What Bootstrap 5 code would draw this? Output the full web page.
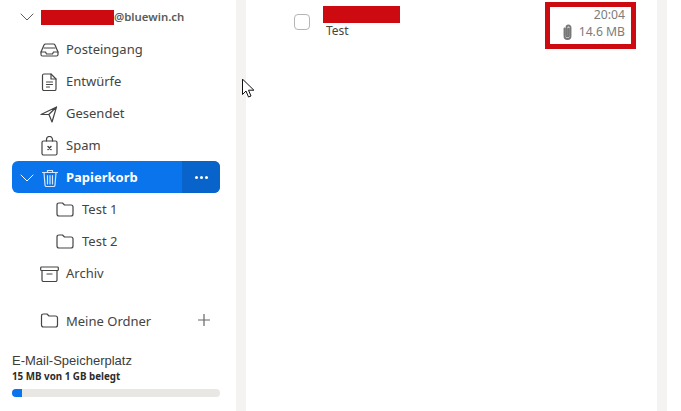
<!DOCTYPE html>
<html lang="de">
<head>
  <meta charset="UTF-8">
  <title>Papierkorb</title>
  <link href="https://cdn.jsdelivr.net/npm/bootstrap@5.3.3/dist/css/bootstrap.min.css" rel="stylesheet">
  <style>
    html, body { height: 100%; overflow: hidden; }
    body { font-family: "Noto Sans", sans-serif; font-size: 13px; color: #444442; background: #fff; }
    .shell { height: 411px; position: relative; }
    .side-pane { width: 236px; padding: 1px 16px 0 12px; }
    .gutter { width: 10px; background: #f4f3f1; }
    .mail-pane { width: 411px; }
    svg { fill: none; stroke: currentColor; stroke-width: 1.2; stroke-linecap: round; stroke-linejoin: round; flex: none; }
    .acct-row, .folder-row { height: 32px; }
    .acct-row { font-size: 11.4px; font-weight: 600; color: #5c5c5a; padding-left: 8px; }
    .acct-row svg { stroke-width: 1; }
    .acct-row .redact { width: 73px; height: 15px; margin-left: 7px; }
    .redact { background: #cc0a10; }
    .folder-row { padding-left: 28px; padding-top: 2px; gap: 7px; }
    .folder-row.nested { padding-left: 44px; gap: 8px; }
    .nested svg { margin-bottom: 2px; }
    .folder-row.active-row { background: #0a74ec; color: #fff; border-radius: 6px; padding-left: 8px; font-weight: 700; overflow: hidden; }
    .active-row svg { stroke-width: 1; }
    .active-row .trash-icon { color: #d3e6fc; stroke-width: 1.2; }
    .more-btn { width: 38px; height: 32px; margin-top: -2px; background: #0863cb; gap: 2px; }
    .more-btn i { width: 3px; height: 3px; background: #fff; border-radius: 50%; }
    .own-folders { margin-top: 16px; }
    .own-folders svg { margin-bottom: 4px; }
    .add-btn { margin-right: 10px; color: #666; }
    .quota { margin-top: 16px; }
    .quota-title { font-family: "Liberation Sans", sans-serif; font-size: 13px; line-height: 16px; color: #3c3c3a; }
    .quota-used { font-size: 9.8px; font-weight: 700; line-height: 16px; color: #2c2c2a; }
    .quota-bar { height: 8px; margin-top: 4px; background: #e8e7e3; border-radius: 4px; overflow: hidden; }
    .quota-fill { height: 100%; background: #0a74ec; }
    .mail-row { padding: 6px 21px 0 48px; }
    .check-box { width: 16px; height: 16px; border: 1px solid #b5b5b3; border-radius: 4px; margin-top: 8px; }
    .mail-text { margin-left: 13px; }
    .mail-text .redact { width: 77px; height: 17px; }
    .mail-subject { line-height: 15px; padding-left: 3px; font-size: 12px; }
    .meta-box { border: 5px solid #cc0a10; width: 91px; height: 47px; margin-top: -4px; padding-right: 6px; font-size: 12.2px; line-height: 16px; color: #7c7c7a; text-align: right; }
    .size-line { margin-top: 1px; gap: 7px; }
    .size-line svg { stroke-width: 1.9; color: #777; }
    .cursor-mark { position: absolute; left: 242px; top: 79px; }
  </style>
</head>
<body>
  <div class="shell d-flex">
    <nav class="side-pane d-flex flex-column">
      <div class="acct-row d-flex align-items-center">
        <svg width="14" height="14" viewBox="0 0 14 14"><path d="M1 4l6 6 6-6"/></svg>
        <span class="redact"></span><span>@bluewin.ch</span>
      </div>
      <div class="folder-row d-flex align-items-center">
        <svg width="19" height="16" viewBox="0 0 19 16"><path d="M1 10l3-7q.5-1 1.500-1h8q1 0 1.500 1l3 7v2.500q0 1.500-1.500 1.500h-14q-1.500 0-1.500-1.500z"/><path d="M1 10h4.500l1 2h6l1-2h4.500M4 6h11"/></svg>
        <span>Posteingang</span>
      </div>
      <div class="folder-row d-flex align-items-center">
        <svg width="19" height="18" viewBox="0 0 19 18"><path d="M2.500 2.500q0-1.500 1.500-1.500h7l5 5v10q0 1.500-1.500 1.500h-10.500q-1.500 0-1.500-1.500z"/><path d="M11 1v5h5M6.500 9h6M6.500 11.500h6M6.500 14h3"/></svg>
        <span>Entwürfe</span>
      </div>
      <div class="folder-row d-flex align-items-center">
        <svg width="19" height="18" viewBox="0 0 19 18"><path d="M1 9.500l15.500-7.500-4.500 15-3-7.500zM8.800 9.500l7.700-7.500"/></svg>
        <span>Gesendet</span>
      </div>
      <div class="folder-row d-flex align-items-center">
        <svg width="19" height="20" viewBox="0 0 19 20"><rect x="2" y="5" width="15" height="14" rx="1.500"/><path d="M6.500 5v-1.500a3 3 0 0 1 6 0v1.500"/><path stroke-width="1.500" d="M8 10.500l3 3M11 10.500l-3 3"/></svg>
        <span>Spam</span>
      </div>
      <div class="folder-row active-row d-flex align-items-center">
        <svg width="14" height="14" viewBox="0 0 14 14"><path d="M1 4l6 6 6-6"/></svg>
        <svg class="trash-icon" width="18" height="18" viewBox="0 0 18 18"><path d="M1.500 3.500h15M6.500 3v-1.500h5v1.500M3 3.500l1 12.500q0 1.500 1.500 1.500h7q1.500 0 1.500-1.500l1-12.500M6.500 6.500v8.500M9 6.500v8.500M11.500 6.500v8.500"/></svg>
        <span class="flex-grow-1">Papierkorb</span>
        <span class="more-btn d-flex align-items-center justify-content-center"><i></i><i></i><i></i></span>
      </div>
      <div class="folder-row nested d-flex align-items-center">
        <svg width="18" height="15" viewBox="0 0 18 15"><path d="M1 3q0-2 2-2h3.500l2 2h6.500q2 0 2 2v7q0 2-2 2h-12q-2 0-2-2z"/></svg>
        <span>Test 1</span>
      </div>
      <div class="folder-row nested d-flex align-items-center">
        <svg width="18" height="15" viewBox="0 0 18 15"><path d="M1 3q0-2 2-2h3.500l2 2h6.500q2 0 2 2v7q0 2-2 2h-12q-2 0-2-2z"/></svg>
        <span>Test 2</span>
      </div>
      <div class="folder-row d-flex align-items-center">
        <svg width="19" height="16" viewBox="0 0 19 16"><rect x=".7" y="1" width="17.600" height="3.500" rx=".8"/><path d="M2 4.500v9.500q0 1.500 1.500 1.500h12q1.500 0 1.500-1.500v-9.500M7 8h5"/></svg>
        <span>Archiv</span>
      </div>
      <div class="folder-row own-folders d-flex align-items-center">
        <svg width="19" height="15" viewBox="0 0 18 15"><path d="M1 3q0-2 2-2h3.500l2 2h6.500q2 0 2 2v7q0 2-2 2h-12q-2 0-2-2z"/></svg>
        <span class="flex-grow-1">Meine Ordner</span>
        <svg class="add-btn" width="12" height="12" viewBox="0 0 12 12"><path d="M6 0v12M0 6h12"/></svg>
      </div>
      <div class="quota">
        <div class="quota-title">E-Mail-Speicherplatz</div>
        <div class="quota-used">15 MB von 1 GB belegt</div>
        <div class="quota-bar"><div class="quota-fill" style="width: 5%"></div></div>
      </div>
    </nav>
    <div class="gutter"></div>
    <main class="mail-pane">
      <div class="mail-row d-flex align-items-start">
        <span class="check-box"></span>
        <div class="mail-text flex-grow-1">
          <div class="redact"></div>
          <div class="mail-subject">Test</div>
        </div>
        <div class="meta-box">
          <div>20:04</div>
          <div class="size-line d-flex justify-content-end align-items-center">
            <svg width="9" height="16" viewBox="0 0 9 16"><path d="M1.500 4.500v7.500a3 3 0 0 0 6 0V3.500a2 2 0 0 0-4 0v8a1 1 0 0 0 2 0V4.500"/></svg>
            <span>14.6 MB</span>
          </div>
        </div>
      </div>
    </main>
    <div class="gutter"></div>
    <svg class="cursor-mark" width="13" height="20" viewBox="0 0 13 20"><path d="M.5.500v15l3.500-3.500 2.500 6 2.500-1-2.500-5.800h5z" fill="#fff" stroke="#111" stroke-width="1"/></svg>
  </div>
</body>
</html>
